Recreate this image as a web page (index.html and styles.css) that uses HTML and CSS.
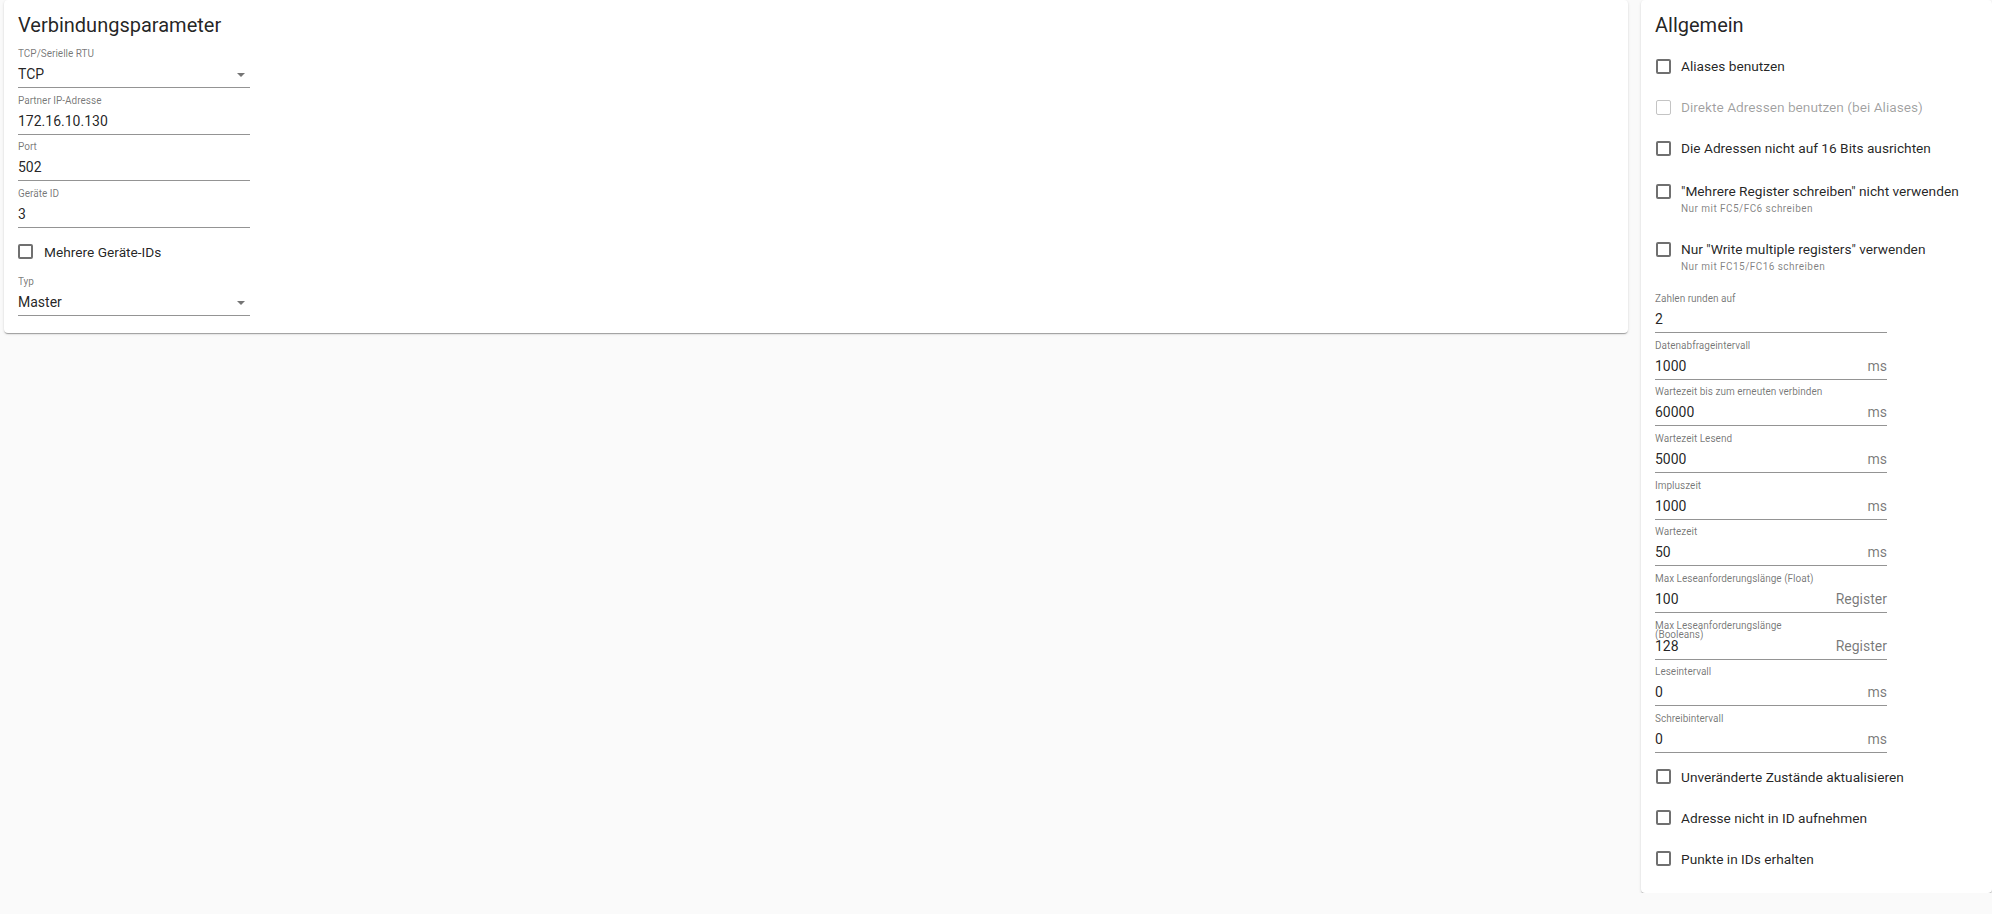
FILE: index.html
```html
<!DOCTYPE html>
<html lang="de">
<head>
  <meta charset="UTF-8" />
  <meta name="viewport" content="width=device-width, initial-scale=1.0" />
  <title>Modbus Einstellungen</title>
  <link rel="stylesheet" href="styles.css">
</head>
<body>
  <div class="page">
    <section class="card card-main">
      <h2 class="card-title">Verbindungsparameter</h2>

      <div class="field">
        <label class="field-label">TCP/Serielle RTU</label>
        <div class="field-input">
          <span class="field-value">TCP</span>
          <svg class="select-arrow" width="8" height="4" viewBox="0 0 8 4"><path d="M0 0h8L4 4z" /></svg>
        </div>
      </div>
      <div class="field">
        <label class="field-label">Partner IP-Adresse</label>
        <div class="field-input"><span class="field-value">172.16.10.130</span></div>
      </div>
      <div class="field">
        <label class="field-label">Port</label>
        <div class="field-input"><span class="field-value">502</span></div>
      </div>
      <div class="field">
        <label class="field-label">Geräte ID</label>
        <div class="field-input"><span class="field-value">3</span></div>
      </div>

      <div class="check">
        <span class="box"></span>
        <span class="check-label">Mehrere Geräte-IDs</span>
      </div>

      <div class="field">
        <label class="field-label">Typ</label>
        <div class="field-input">
          <span class="field-value">Master</span>
          <svg class="select-arrow" width="8" height="4" viewBox="0 0 8 4"><path d="M0 0h8L4 4z" /></svg>
        </div>
      </div>
    </section>

    <section class="card card-side">
      <h2 class="card-title">Allgemein</h2>

      <div class="check">
        <span class="box"></span>
        <span class="check-label">Aliases benutzen</span>
      </div>
      <div class="check disabled">
        <span class="box"></span>
        <span class="check-label">Direkte Adressen benutzen (bei Aliases)</span>
      </div>
      <div class="check">
        <span class="box"></span>
        <span class="check-label">Die Adressen nicht auf 16 Bits ausrichten</span>
      </div>
      <div class="check check-help">
        <span class="box"></span>
        <div>
          <div class="check-label">"Mehrere Register schreiben" nicht verwenden</div>
          <div class="help">Nur mit FC5/FC6 schreiben</div>
        </div>
      </div>
      <div class="check check-help">
        <span class="box"></span>
        <div>
          <div class="check-label">Nur "Write multiple registers" verwenden</div>
          <div class="help">Nur mit FC15/FC16 schreiben</div>
        </div>
      </div>

      <div class="field">
        <label class="field-label">Zahlen runden auf</label>
        <div class="field-input"><span class="field-value">2</span></div>
      </div>
      <div class="field">
        <label class="field-label">Datenabfrageintervall</label>
        <div class="field-input"><span class="field-value">1000</span><span class="unit">ms</span></div>
      </div>
      <div class="field">
        <label class="field-label">Wartezeit bis zum erneuten verbinden</label>
        <div class="field-input"><span class="field-value">60000</span><span class="unit">ms</span></div>
      </div>
      <div class="field">
        <label class="field-label">Wartezeit Lesend</label>
        <div class="field-input"><span class="field-value">5000</span><span class="unit">ms</span></div>
      </div>
      <div class="field">
        <label class="field-label">Impluszeit</label>
        <div class="field-input"><span class="field-value">1000</span><span class="unit">ms</span></div>
      </div>
      <div class="field">
        <label class="field-label">Wartezeit</label>
        <div class="field-input"><span class="field-value">50</span><span class="unit">ms</span></div>
      </div>
      <div class="field">
        <label class="field-label">Max Leseanforderungslänge (Float)</label>
        <div class="field-input"><span class="field-value">100</span><span class="unit">Register</span></div>
      </div>
      <div class="field">
        <label class="field-label label-wrap">Max Leseanforderungslänge (Booleans)</label>
        <div class="field-input"><span class="field-value">128</span><span class="unit">Register</span></div>
      </div>
      <div class="field">
        <label class="field-label">Leseintervall</label>
        <div class="field-input"><span class="field-value">0</span><span class="unit">ms</span></div>
      </div>
      <div class="field">
        <label class="field-label">Schreibintervall</label>
        <div class="field-input"><span class="field-value">0</span><span class="unit">ms</span></div>
      </div>

      <div class="check">
        <span class="box"></span>
        <span class="check-label">Unveränderte Zustände aktualisieren</span>
      </div>
      <div class="check">
        <span class="box"></span>
        <span class="check-label">Adresse nicht in ID aufnehmen</span>
      </div>
      <div class="check">
        <span class="box"></span>
        <span class="check-label">Punkte in IDs erhalten</span>
      </div>
    </section>
  </div>
</body>
</html>
```

FILE: styles.css
```css
body, html {
  margin: 0;
  padding: 0;
  font-family: Roboto, 'Liberation Sans', Arial, sans-serif;
  background: #fafafa;
  color: rgba(0,0,0,0.87);
}
.page {
  display: grid;
  grid-template-columns: 1fr 351px;
  column-gap: 13px;
  align-items: start;
  padding-left: 4px;
}
.card {
  background: #fff;
  border-radius: 4px;
  box-shadow: 0 2px 1px -1px rgba(0,0,0,0.2), 0 1px 1px 0 rgba(0,0,0,0.14), 0 1px 3px 0 rgba(0,0,0,0.12);
  padding: 13px 14px 17px;
}
.card-side {
  padding-bottom: 13.5px;
}
.card-title {
  margin: 0;
  font-size: 20px;
  line-height: 24px;
  font-weight: 400;
}

/* text fields */
.field {
  width: 232px;
  margin-top: 6.67px;
}
.card-title + .field {
  margin-top: 11px;
}
.check + .field {
  margin-top: 3.5px;
}
.check-help + .field {
  margin-top: 8.5px;
}
.field-label {
  display: block;
  height: 12px;
  font-size: 10px;
  line-height: 12px;
  color: rgba(0,0,0,0.54);
  white-space: nowrap;
}
.label-wrap {
  white-space: normal;
  width: 140px;
  line-height: 8.6px;
  padding-top: 2.4px;
  box-sizing: border-box;
}
.field-input {
  display: flex;
  align-items: center;
  justify-content: space-between;
  margin-top: 4px;
  height: 20px;
  padding-bottom: 3px;
  border-bottom: 1px solid rgba(0,0,0,0.42);
}
.field-value {
  font-size: 14px;
  line-height: 20px;
}
.unit {
  font-size: 14px;
  line-height: 20px;
  color: rgba(0,0,0,0.54);
}
.select-arrow {
  fill: #757575;
  margin-right: 5px;
  margin-top: 2px;
}

/* checkboxes */
.check {
  display: flex;
  align-items: center;
  height: 41px;
  margin-top: 3.5px;
}
.card-title + .check,
.check + .check {
  margin-top: 0;
}
.card-title + .check {
  margin-top: 8.5px;
}
.box {
  flex: none;
  width: 15px;
  height: 15px;
  box-sizing: border-box;
  border: 2px solid #707070;
  border-radius: 2px;
  margin-right: 11px;
}
.card-side .box {
  margin-left: 1px;
  margin-right: 10px;
}
.check-label {
  font-size: 13.7px;
  line-height: 20px;
}
.disabled .box {
  border-color: #c4c4c4;
  border-width: 1.5px;
}
.disabled .check-label {
  color: rgba(0,0,0,0.38);
}
.check-help {
  height: auto;
  align-items: flex-start;
  padding: 12.5px 0 11.5px;
}
.check-help .box {
  margin-top: 2.5px;
}
.help {
  margin-top: 2px;
  font-size: 10px;
  line-height: 12px;
  letter-spacing: 0.45px;
  color: rgba(0,0,0,0.5);
}
```
